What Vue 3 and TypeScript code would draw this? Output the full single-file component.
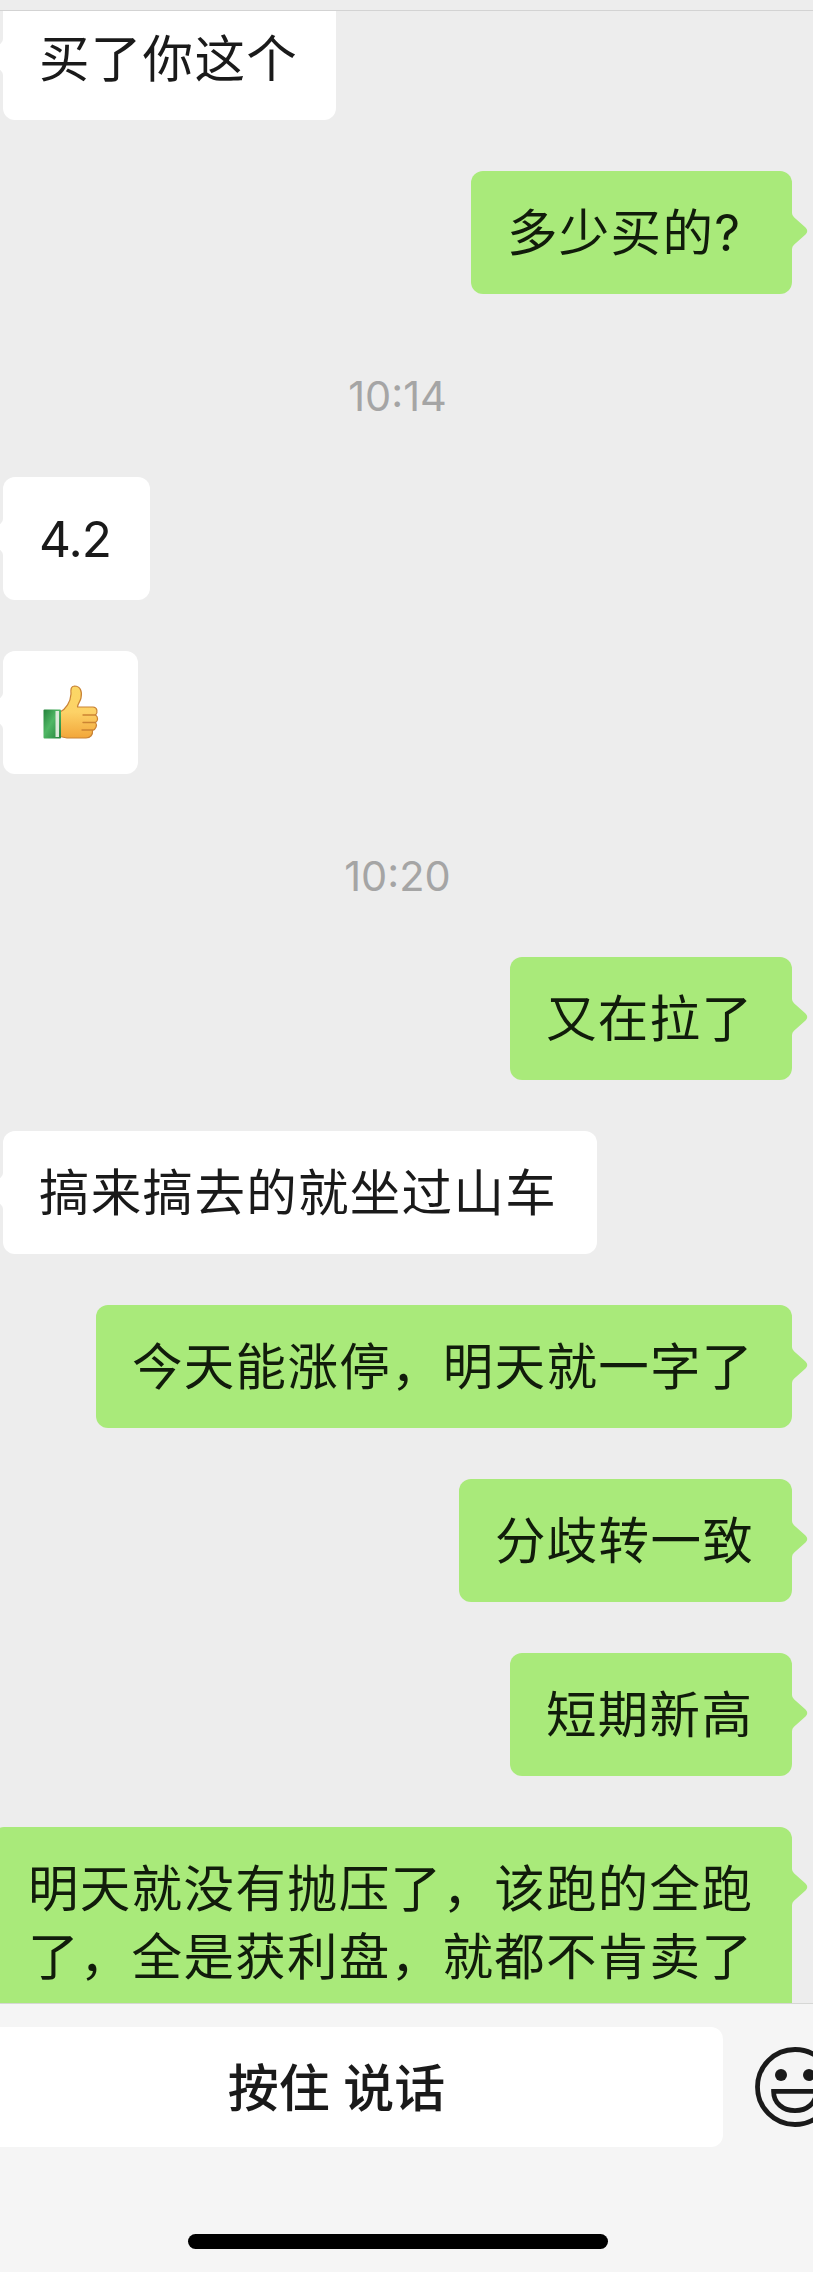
<script setup lang="ts">
interface Entry {
  kind: 'in' | 'out' | 'time'
  lines: string[]
  width?: number
  emoji?: boolean
  latin?: boolean
}

const entries: Entry[] = [
  { kind: 'in', lines: ['买了你这个'], width: 333 },
  { kind: 'out', lines: ['多少买的?'], width: 321 },
  { kind: 'time', lines: ['10:14'] },
  { kind: 'in', lines: ['4.2'], width: 147, latin: true },
  { kind: 'in', lines: [], width: 135, emoji: true },
  { kind: 'time', lines: ['10:20'] },
  { kind: 'out', lines: ['又在拉了'], width: 282 },
  { kind: 'in', lines: ['搞来搞去的就坐过山车'], width: 594 },
  { kind: 'out', lines: ['今天能涨停，明天就一字了'], width: 696 },
  { kind: 'out', lines: ['分歧转一致'], width: 333 },
  { kind: 'out', lines: ['短期新高'], width: 282 },
  { kind: 'out', lines: ['明天就没有抛压了，该跑的全跑', '了，全是获利盘，就都不肯卖了'], width: 800 },
]
</script>

<template>
  <div class="screen" lang="zh-CN">
    <header class="top"></header>
    <main class="chat">
      <template v-for="(e, i) in entries" :key="i">
        <div v-if="e.kind === 'time'" class="time">{{ e.lines[0] }}</div>
        <div v-else class="row" :class="e.kind">
          <div class="bubble" :style="{ width: e.width + 'px' }">
            <svg class="tail" width="16" height="36" viewBox="0 0 16 36">
              <path d="M0 0Q0 2.500 2 4.300L13.500 14.500Q17 18 13.500 21.500L2 31.700Q0 33.500 0 36Z" />
            </svg>
            <svg v-if="e.emoji" class="thumb" width="56" height="56" viewBox="0 0 56 56">
              <defs>
                <linearGradient id="skin" x1="0" y1="0" x2="0" y2="1">
                  <stop offset="0" stop-color="#fbd765" />
                  <stop offset="0.5" stop-color="#fdd267" />
                  <stop offset="1" stop-color="#f2a63a" />
                </linearGradient>
                <linearGradient id="cuff" x1="0" y1="0" x2="1" y2="1">
                  <stop offset="0" stop-color="#23823b" />
                  <stop offset="0.45" stop-color="#50b765" />
                  <stop offset="1" stop-color="#23823b" />
                </linearGradient>
              </defs>
              <path
                d="M17 27C23 24 27.500 17 28 9C27.500 4 28 1.200 31.500 1C37 1 39.500 6 38 13C37.300 16.500 34.500 19 34.500 22H50C54.500 22 55 27.500 52.500 30C55.500 32 55 36 52.500 37.500C54.500 40 53 44.500 49.500 45.500C50 49.500 47.500 53 43 53H24L17 51.500Z"
                fill="url(#skin)" stroke="#c98336" stroke-width="1.200" stroke-linejoin="round"
              />
              <path d="M40 30H52.500M40 37.500H52.500M39 45H49.500" fill="none" stroke="#cc8433" stroke-width="1.300" stroke-linecap="round" />
              <rect x="0.500" y="24.500" width="17.500" height="29" rx="1" fill="url(#cuff)" />
              <rect x="12.500" y="26" width="3.500" height="26" fill="#dce9da" />
            </svg>
            <div v-for="line in e.lines" :key="line" class="line" :class="{ latin: e.latin }">{{ line }}</div>
          </div>
        </div>
      </template>
    </main>
    <footer class="bar">
      <div class="controls">
        <div class="talk">按住 说话</div>
        <svg class="smile" width="80" height="80" viewBox="0 0 80 80" fill="none" stroke="#1a1a1a" stroke-width="4.800">
          <circle cx="40" cy="40" r="37.500" />
          <circle cx="26" cy="28" r="6" fill="#1a1a1a" stroke="none" />
          <circle cx="54" cy="28" r="6" fill="#1a1a1a" stroke="none" />
          <path d="M18.600 44.400H61.400C61.400 56 52 63.600 40 63.600S18.600 56 18.600 44.400Z" />
        </svg>
      </div>
      <div class="home"></div>
    </footer>
  </div>
</template>

<style>
body {
  margin: 0;
}
</style>

<style scoped>
.screen {
  width: 813px;
  height: 2272px;
  overflow: hidden;
  display: flex;
  flex-direction: column;
  background: #ededed;
  color: #1a1a1a;
  font-family: Inter, "Noto Sans CJK SC", sans-serif;
}
.top {
  box-sizing: border-box;
  flex: none;
  height: 11px;
  border-bottom: 1px solid #d3d3d3;
}
.chat {
  flex: none;
  height: 1992px;
  overflow: hidden;
}
.row {
  display: flex;
  padding: 0 21px 0 3px;
  margin-bottom: 51px;
}
.row:first-child {
  margin-top: -14px;
}
.out {
  justify-content: flex-end;
}
.bubble {
  position: relative;
  flex: none;
  box-sizing: border-box;
  min-height: 123px;
  padding: 28px 0 27px 36px;
  border-radius: 12px;
  background: #fff;
  white-space: nowrap;
}
.out .bubble {
  background: #a9ea7a;
  color: #111c0b;
}
.line {
  height: 68px;
  line-height: 68px;
  font-size: 50.5px;
  letter-spacing: 1.3px;
}
.line.latin {
  font-size: 49.5px;
  letter-spacing: -0.9px;
}
.tail {
  position: absolute;
  top: 42px;
  left: 100%;
  fill: #a9ea7a;
}
.in .tail {
  left: auto;
  right: 100%;
  transform: scaleX(-1);
  fill: #fff;
}
.thumb {
  display: block;
  margin: 6px 0 0 4px;
}
.time {
  box-sizing: border-box;
  height: 183px;
  margin-top: -51px;
  padding: 21px 18px 0 0;
  line-height: 162px;
  text-align: center;
  font-size: 41.5px;
  color: #a5a5a5;
}
.bar {
  box-sizing: border-box;
  flex: 1;
  border-top: 1px solid #d6d7d5;
  background: #f5f5f5;
  padding-top: 23px;
}
.controls {
  display: flex;
  align-items: center;
  gap: 32px;
}
.talk {
  flex: none;
  box-sizing: border-box;
  width: 773px;
  height: 120px;
  margin-left: -50px;
  border-radius: 12px;
  background: #fff;
  line-height: 123px;
  text-align: center;
  font-size: 51px;
  font-weight: 500;
}
.smile {
  flex: none;
}
.home {
  width: 420px;
  height: 15px;
  margin: 87px 0 0 188px;
  border-radius: 8px;
  background: #000;
}
</style>
